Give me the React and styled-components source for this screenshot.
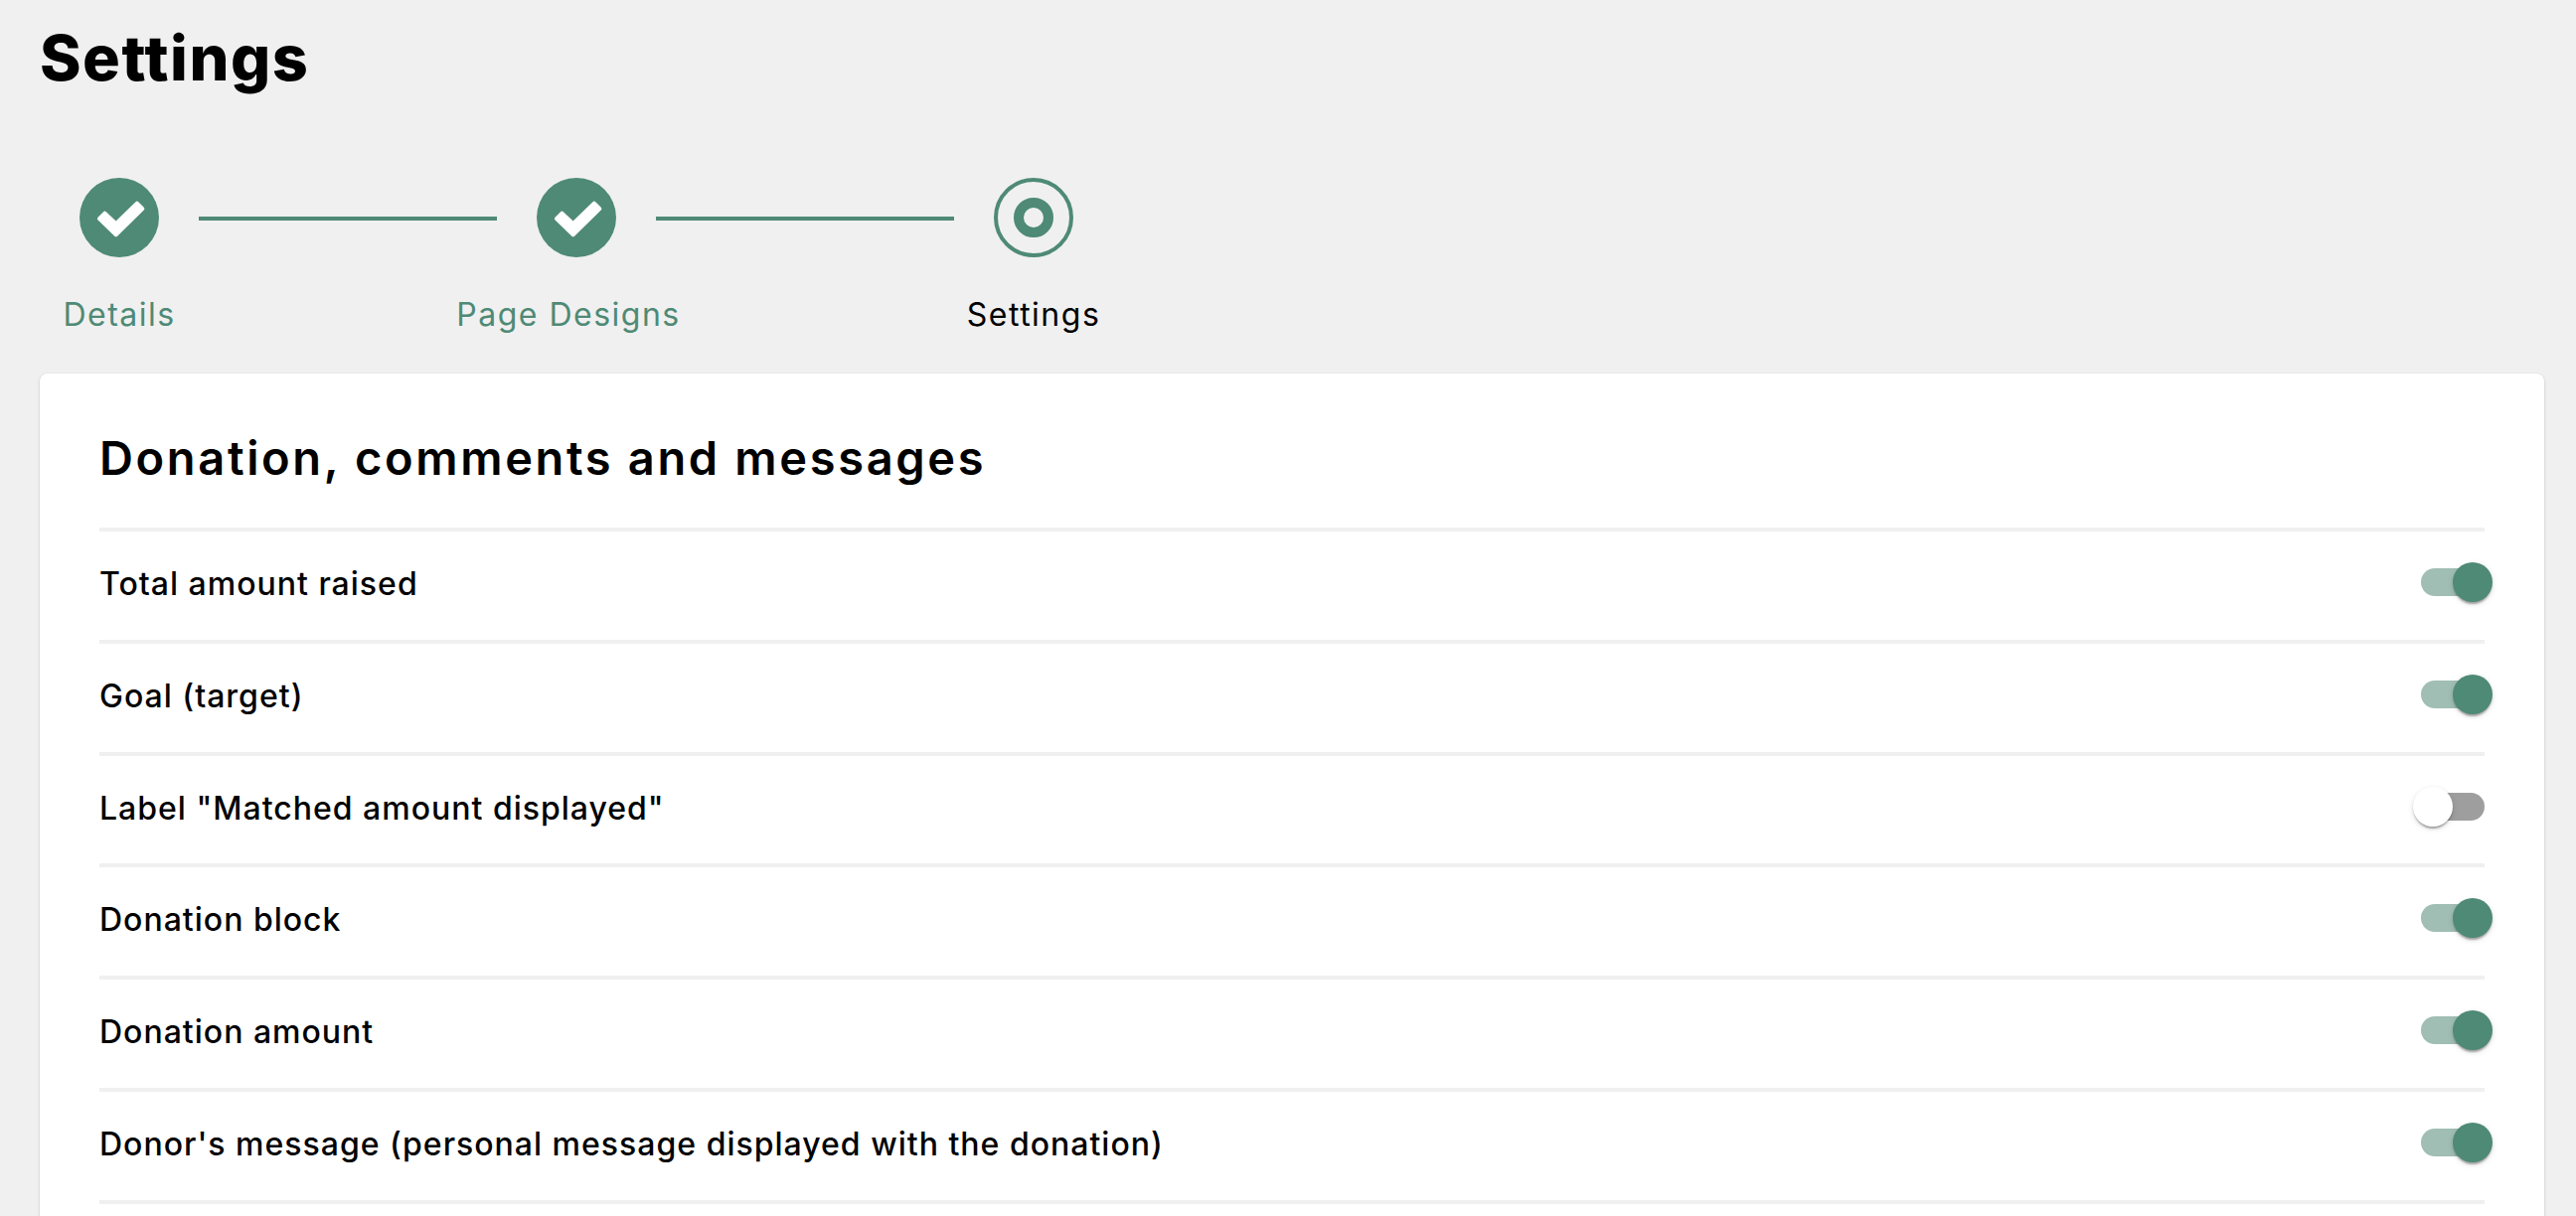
import { createGlobalStyle } from "styled-components"
import styled from "styled-components"

const GREEN = "#4e8a75"

const GlobalStyle = createGlobalStyle`
    html, body {
        margin: 0;
        height: 100%;
        overflow: hidden;
        background: #f0f0f0;
        font-family: "Inter", "Liberation Sans", sans-serif;
        color: #000;
    }
`

const Page = styled.main`
    height: 1224px;
    overflow: hidden;
    padding: 0 32px 0 40px;
`

const Title = styled.h1`
    margin: 0;
    padding-top: 22px;
    height: 92px;
    font-size: 63px;
    line-height: 72px;
    font-weight: 800;
    letter-spacing: 1.5px;
`

const Stepper = styled.div`
    display: flex;
    align-items: flex-start;
    margin-top: 65px;
    height: 197px;
    padding-left: 40px;
`

const Step = styled.div`
    width: 80px;
    display: flex;
    flex-direction: column;
    align-items: center;
    flex: none;
`

const StepLabel = styled.span`
    margin-top: 36px;
    font-size: 32px;
    line-height: 44px;
    white-space: nowrap;
    color: ${p => (p.$active ? "#000" : GREEN)};
    position: relative;
    left: ${p => p.$shift || 0}px;
    letter-spacing: 1.5px;
`

const Connector = styled.div`
    width: 300px;
    height: 4px;
    margin: 39px 40px 0;
    flex: none;
    background: ${GREEN};
`

const Card = styled.section`
    background: #fff;
    border-radius: 8px;
    box-shadow: 0 1px 3px rgba(0, 0, 0, 0.2);
    padding: 0 60px;
    height: 900px;
`

const CardTitle = styled.h2`
    margin: 0;
    padding-top: 57px;
    height: 98px;
    font-size: 47px;
    line-height: 56px;
    font-weight: 600;
    letter-spacing: 2.65px;
`

const Row = styled.div`
    display: flex;
    align-items: center;
    justify-content: space-between;
    height: 112.83px;
    box-sizing: border-box;
    border-top: 4px solid #f0f0f0;
`

const RowLabel = styled.span`
    font-size: 32px;
    font-weight: 500;
    letter-spacing: 1px;
    margin-top: -4px;
`

const Track = styled.div`
    position: relative;
    width: 64px;
    height: 28px;
    border-radius: 14px;
    margin-top: -7px;
    background: ${p => (p.$on ? "#a0beb3" : "#9e9e9e")};
`

const Thumb = styled.div`
    position: absolute;
    top: -6px;
    width: 40px;
    height: 40px;
    border-radius: 50%;
    left: ${p => (p.$on ? "32px" : "-8px")};
    background: ${p => (p.$on ? GREEN : "#fff")};
    box-shadow: 0 4px 2px -2px rgba(0, 0, 0, 0.2), 0 2px 2px rgba(0, 0, 0, 0.14), 0 2px 6px rgba(0, 0, 0, 0.12);
`

const rows = [
    { label: "Total amount raised", on: true },
    { label: "Goal (target)", on: true },
    { label: 'Label "Matched amount displayed"', on: false },
    { label: "Donation block", on: true },
    { label: "Donation amount", on: true },
    { label: "Donor's message (personal message displayed with the donation)", on: true },
    { label: "", on: null },
]

function DoneIcon() {
    return (
        <svg width="80" height="80" viewBox="0 0 80 80">
            <circle cx="40" cy="40" r="40" fill={GREEN} />
            <path
                d="M25.46 35.64 L36.7 46.2 L57.84 25.64 L63.36 31.16 L36.7 57.2 L19.94 41.16 Z"
                fill="#fff"
                stroke="#fff"
                strokeWidth="4"
                strokeLinejoin="round"
            />
        </svg>
    )
}

function ActiveIcon() {
    return (
        <svg width="80" height="80" viewBox="0 0 80 80">
            <circle cx="40" cy="40" r="38" fill="none" stroke={GREEN} strokeWidth="4" />
            <circle cx="40" cy="40" r="15" fill="none" stroke={GREEN} strokeWidth="10" />
        </svg>
    )
}

export default function App() {
    return (
        <Page>
            <GlobalStyle />
            <Title>Settings</Title>
            <Stepper>
                <Step>
                    <DoneIcon />
                    <StepLabel>Details</StepLabel>
                </Step>
                <Connector />
                <Step>
                    <DoneIcon />
                    <StepLabel $shift={-8}>Page Designs</StepLabel>
                </Step>
                <Connector />
                <Step>
                    <ActiveIcon />
                    <StepLabel $active>Settings</StepLabel>
                </Step>
            </Stepper>
            <Card>
                <CardTitle>Donation, comments and messages</CardTitle>
                {rows.map((r, i) => (
                    <Row key={i}>
                        <RowLabel>{r.label}</RowLabel>
                        {r.on !== null && (
                            <Track $on={r.on}>
                                <Thumb $on={r.on} />
                            </Track>
                        )}
                    </Row>
                ))}
            </Card>
        </Page>
    )
}
